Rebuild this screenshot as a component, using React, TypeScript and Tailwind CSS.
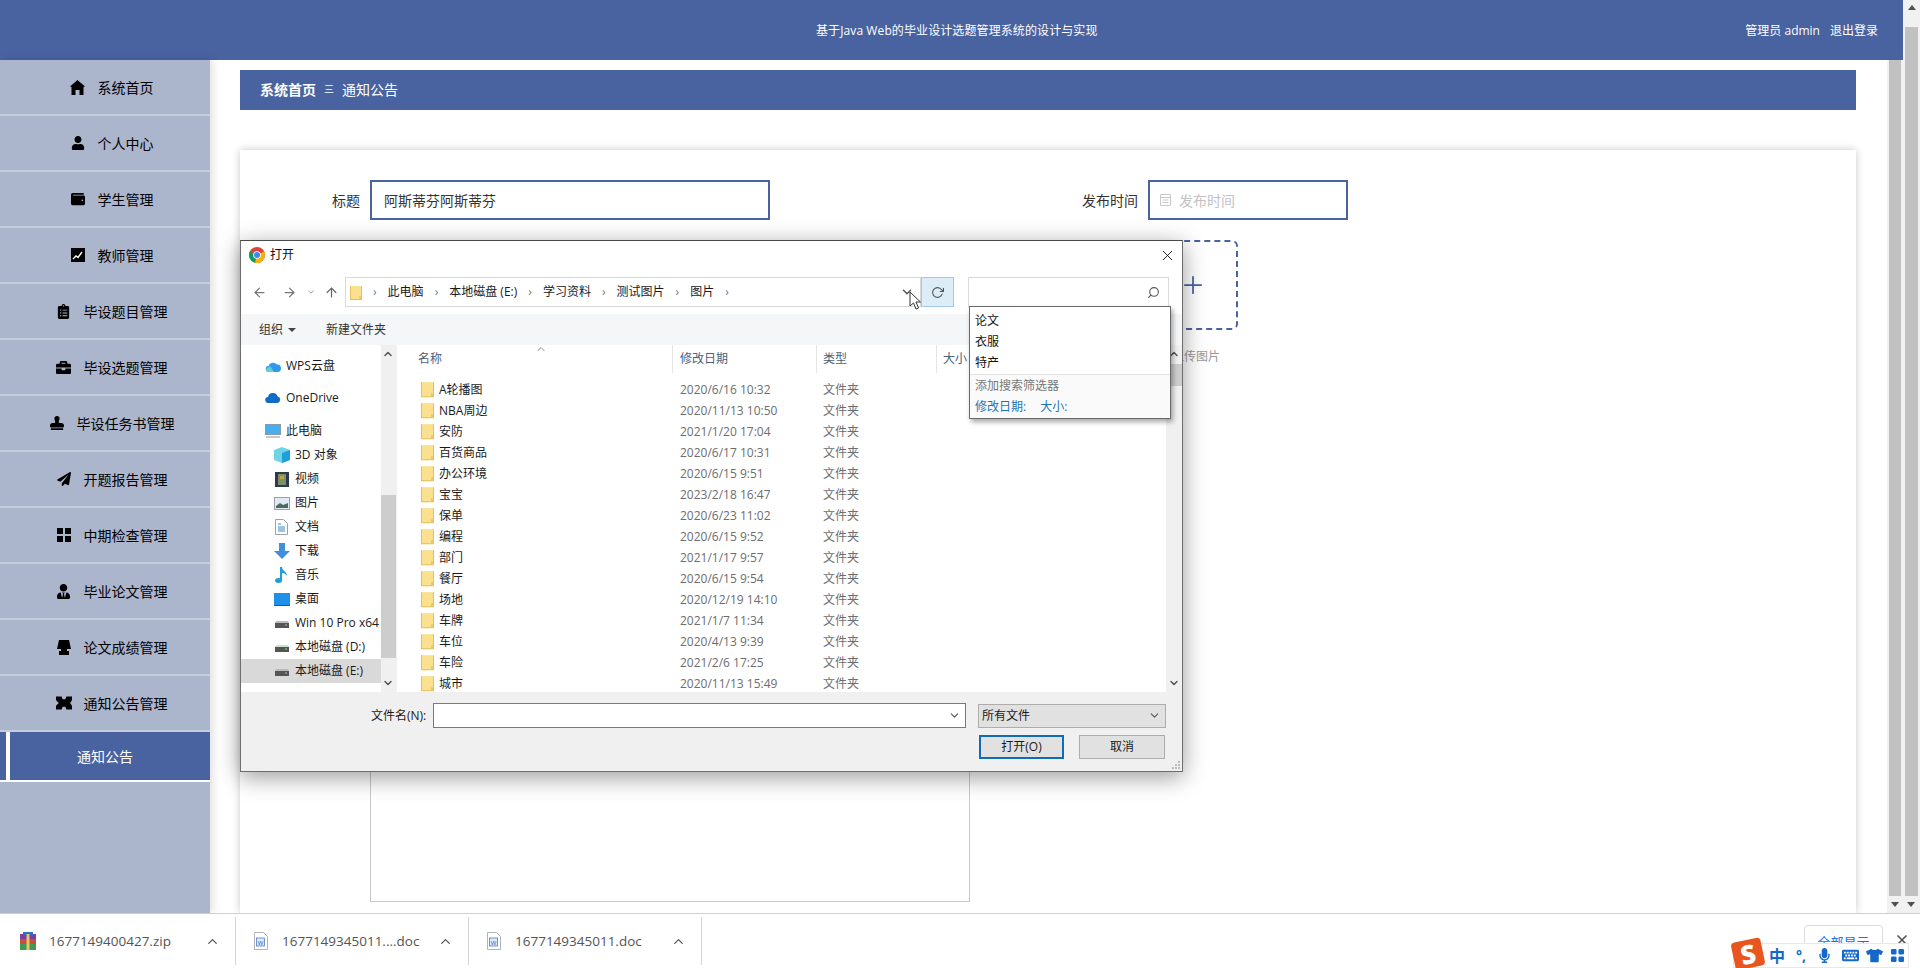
import { ReactNode } from "react";
import {
  FaUser,
  FaWallet,
  FaClipboardList,
  FaBriefcase,
  FaStamp,
  FaPaperPlane,
  FaUserTie,
  FaMicrophone,
  FaKeyboard,
  FaTshirt,
} from "react-icons/fa";
import { BsGridFill } from "react-icons/bs";
import { FiChevronDown, FiChevronUp, FiX, FiPlus, FiArrowLeft, FiArrowRight, FiArrowUp, FiRotateCw, FiSearch } from "react-icons/fi";

const HomeIcon = () => (
  <svg width="15" height="15" viewBox="0 0 15 15">
    <path d="M7.500 0L15 6.500 13.500 7V15H9.500V10h-4v5H1.500V7L0 6.500z" fill="#000" />
  </svg>
);

const TeacherIcon = () => (
  <svg width="14" height="14" viewBox="0 0 14 14">
    <rect width="14" height="14" fill="#000" />
    <polyline points="2,11 5,8 7,9.5 11,4" fill="none" stroke="#fff" strokeWidth="1.4" />
  </svg>
);

const GridIcon = () => (
  <svg width="14" height="14" viewBox="0 0 14 14">
    <path d="M0 0h6v6H0zM8 0h6v6H8zM0 8h6v6H0zM8 8h6v6H8z" fill="#000" />
  </svg>
);

const ScoreIcon = () => (
  <svg width="14" height="15" viewBox="0 0 14 15">
    <path d="M2 0h10l2 9H0z" fill="#000" />
    <path d="M2 11h10v4H2z" fill="#000" />
    <path d="M4 9h6v2H4z" fill="#000" />
  </svg>
);

const TicketIcon = () => (
  <svg width="17" height="14" viewBox="0 0 17 14">
    <path d="M0 0h6l1 3h3l1-3h6v4l-2 3 2 3v4h-6l-1-3H7l-1 3H0v-4l3-3-3-3z" fill="#000" />
  </svg>
);

const menu: { label: string; icon: ReactNode }[] = [
  { label: "系统首页", icon: <HomeIcon /> },
  { label: "个人中心", icon: <FaUser size={14} /> },
  { label: "学生管理", icon: <FaWallet size={14} /> },
  { label: "教师管理", icon: <TeacherIcon /> },
  { label: "毕设题目管理", icon: <FaClipboardList size={15} /> },
  { label: "毕设选题管理", icon: <FaBriefcase size={15} /> },
  { label: "毕设任务书管理", icon: <FaStamp size={14} /> },
  { label: "开题报告管理", icon: <FaPaperPlane size={14} /> },
  { label: "中期检查管理", icon: <GridIcon /> },
  { label: "毕业论文管理", icon: <FaUserTie size={15} /> },
  { label: "论文成绩管理", icon: <ScoreIcon /> },
  { label: "通知公告管理", icon: <TicketIcon /> },
];

const files = [
  ["A轮播图", "2020/6/16 10:32"],
  ["NBA周边", "2020/11/13 10:50"],
  ["安防", "2021/1/20 17:04"],
  ["百货商品", "2020/6/17 10:31"],
  ["办公环境", "2020/6/15 9:51"],
  ["宝宝", "2023/2/18 16:47"],
  ["保单", "2020/6/23 11:02"],
  ["编程", "2020/6/15 9:52"],
  ["部门", "2021/1/17 9:57"],
  ["餐厅", "2020/6/15 9:54"],
  ["场地", "2020/12/19 14:10"],
  ["车牌", "2021/1/7 11:34"],
  ["车位", "2020/4/13 9:39"],
  ["车险", "2021/2/6 17:25"],
  ["城市", "2020/11/13 15:49"],
];

const Folder = ({ size = 13 }: { size?: number }) => (
  <svg width={size} height={size * 1.25} viewBox="0 0 13 16" className="shrink-0">
    <path d="M0 1h13v15H0z" fill="#fbe08e" />
    <path d="M0 1h1v15H0zM0 15h13v1H0zM12 1h1v15h-1z" fill="#e3bf62" />
    <path d="M10 12h2v3h-2z" fill="#e9c86c" />
  </svg>
);

const Drive = ({ dark }: { dark?: boolean }) => (
  <svg width="14" height="10" viewBox="0 0 14 10">
    <path d="M1 3h12l1 2H0z" fill={dark ? "#bbb" : "#cfe0cf"} />
    <rect y="5" width="14" height="5" fill="#555" />
    <rect x="10" y="6.500" width="2" height="1" fill="#9c9" />
  </svg>
);

const navItems: { label: string; icon: ReactNode; pl: string; h: string }[] = [
  {
    label: "WPS云盘",
    pl: "pl-[23px]",
    h: "h-[32px]",
    icon: (
      <svg width="16" height="12" viewBox="0 0 16 12">
        <path d="M4 12a3 3 0 0 1-.6-6A5 5 0 0 1 12 4.6 3.7 3.7 0 0 1 12.500 12z" fill="#2f9be8" />
        <path d="M1 9a3 3 0 0 0 3 3h5L5 6z" fill="#62cfd6" />
      </svg>
    ),
  },
  {
    label: "OneDrive",
    pl: "pl-[23px]",
    h: "h-[31px] mb-[6px]",
    icon: (
      <svg width="16" height="11" viewBox="0 0 16 11">
        <path d="M3.500 11a3 3 0 0 1-.5-6 5 5 0 0 1 9.500-.8A3.500 3.500 0 0 1 12.500 11z" fill="#0f6cc4" />
      </svg>
    ),
  },
  {
    label: "此电脑",
    pl: "pl-[23px]",
    h: "h-[24px]",
    icon: (
      <svg width="16" height="14" viewBox="0 0 16 14">
        <rect x=".5" y=".5" width="15" height="10" fill="#45b0ef" stroke="#8a9aa8" />
        <rect x="1" y="12" width="14" height="2" fill="#c3c9cf" />
      </svg>
    ),
  },
  {
    label: "3D 对象",
    pl: "pl-[32px]",
    h: "h-[24px]",
    icon: (
      <svg width="16" height="16" viewBox="0 0 16 16">
        <path d="M8 0l8 3v10l-8 3-8-3V3z" fill="#6fd5e6" />
        <path d="M8 6l8-3v10l-8 3z" fill="#1f9ed8" />
      </svg>
    ),
  },
  {
    label: "视频",
    pl: "pl-[32px]",
    h: "h-[24px]",
    icon: (
      <svg width="16" height="15" viewBox="0 0 16 15">
        <rect x="1" width="14" height="15" fill="#2c3a4c" />
        <rect x="4" y="2" width="8" height="11" fill="#7c8f6c" />
        <rect x="6" y="4" width="4" height="3" fill="#c8a040" />
      </svg>
    ),
  },
  {
    label: "图片",
    pl: "pl-[32px]",
    h: "h-[24px]",
    icon: (
      <svg width="16" height="13" viewBox="0 0 16 13">
        <rect x=".5" y=".5" width="15" height="12" fill="#dfe9f2" stroke="#9aa3ad" />
        <path d="M2 9l4-3 3 2 5-2v5H2z" fill="#4f6a5c" />
      </svg>
    ),
  },
  {
    label: "文档",
    pl: "pl-[32px]",
    h: "h-[24px]",
    icon: (
      <svg width="13" height="16" viewBox="0 0 13 16">
        <path d="M.5.500h8l4 4v11H.5z" fill="#fff" stroke="#9aa3ad" />
        <path d="M3 5h3M3 8h7M3 10h7M3 12h7" stroke="#3f86c4" />
      </svg>
    ),
  },
  {
    label: "下载",
    pl: "pl-[32px]",
    h: "h-[24px]",
    icon: (
      <svg width="16" height="16" viewBox="0 0 16 16">
        <path d="M5 0h6v8h5l-8 8-8-8h5z" fill="#3f8fdc" />
      </svg>
    ),
  },
  {
    label: "音乐",
    pl: "pl-[32px]",
    h: "h-[24px]",
    icon: (
      <svg width="13" height="16" viewBox="0 0 13 16">
        <ellipse cx="3.500" cy="13.500" rx="3.500" ry="2.500" fill="#1f9ed8" />
        <path d="M5 0h2c0 4 5 4 5 9-1-2-3-3-5-3v8H5z" fill="#1f9ed8" />
      </svg>
    ),
  },
  {
    label: "桌面",
    pl: "pl-[32px]",
    h: "h-[24px]",
    icon: (
      <svg width="16" height="13" viewBox="0 0 16 13">
        <rect width="16" height="13" fill="#1e90ea" />
        <rect y="12" width="16" height="1" fill="#0b5fa8" />
      </svg>
    ),
  },
];

const Scrollbar = ({ thumbClass, hidden }: { thumbClass: string; hidden?: boolean }) => (
  <div className="relative h-full w-full bg-[#f1f1f1]">
    <div className={`absolute left-[2px] right-[2px] bottom-[17px] bg-[#c1c1c1] ${thumbClass}`} />
    {!hidden && <div className="absolute top-[5px] left-[5px] h-0 w-0 border-x-[4px] border-b-[5px] border-x-transparent border-b-[#505050]" />}
    <div className="absolute bottom-[6px] left-[4px] h-0 w-0 border-x-[4px] border-t-[5px] border-x-transparent border-t-[#505050]" />
  </div>
);

const Crumb = ({ text }: { text: string }) => (
  <>
    <span className="ml-[11px] text-[#777]">›</span>
    <span className="ml-[11px]">{text}</span>
  </>
);

const Dialog = () => (
  <div className="absolute left-[240px] top-[240px] flex h-[532px] w-[943px] flex-col border border-[#6d6d6d] border-t-[#4a4a4a] bg-white text-[12px] shadow-[0_5px_22px_rgba(0,0,0,0.4)]">
    <div className="flex h-[36px] shrink-0 items-center pb-[8px] pl-[8px]">
      <svg width="16" height="16" viewBox="0 0 16 16">
        <circle cx="8" cy="8" r="8" fill="#db4437" />
        <path d="M8 8L1 4.500A8 8 0 0 0 6 15.800z" fill="#0f9d58" />
        <path d="M8 8l7-3.500A8 8 0 0 1 6 15.800z" fill="#f4b400" />
        <circle cx="8" cy="8" r="3.800" fill="#fff" />
        <circle cx="8" cy="8" r="3" fill="#4285f4" />
      </svg>
      <span className="ml-[5px] text-[#111]">打开</span>
      <FiX size={17} strokeWidth={1.2} className="ml-auto mr-[6px] text-black" />
    </div>

    <div className="flex h-[30px] shrink-0 items-center">
      <FiArrowLeft size={15} className="ml-[11px] text-[#777]" />
      <FiArrowRight size={15} className="ml-[15px] text-[#777]" />
      <FiChevronDown size={10} className="ml-[9px] text-[#888]" />
      <FiArrowUp size={15} className="ml-[8px] text-[#666]" />
      <div className="ml-[6px] flex h-full w-[576px] items-center border border-[#d9d9d9] pl-[4px] text-[#1a1a1a]">
        <Folder size={12} />
        <Crumb text="此电脑" />
        <Crumb text="本地磁盘 (E:)" />
        <Crumb text="学习资料" />
        <Crumb text="测试图片" />
        <Crumb text="图片" />
        <span className="ml-[11px] text-[#777]">›</span>
        <FiChevronDown size={14} strokeWidth={2.5} className="ml-auto mr-[6px] text-[#555]" />
      </div>
      <div className="flex h-full w-[33px] items-center justify-center border border-[#9fcbe8] bg-[#dcedf8]">
        <FiRotateCw size={13} className="text-[#555]" />
      </div>
      <div className="ml-[14px] flex h-full w-[201px] items-center justify-end border border-[#d9d9d9] pr-[8px]">
        <FiSearch size={13} className="-scale-x-100 text-[#555]" />
      </div>
    </div>

    <div className="mt-[7px] flex h-[31px] shrink-0 items-center bg-[#f5f6f7] text-[#333]">
      <span className="ml-[18px]">组织</span>
      <span className="ml-[5px] h-0 w-0 border-x-[4px] border-t-[4px] border-x-transparent border-t-[#444]" />
      <span className="ml-[30px]">新建文件夹</span>
    </div>

    <div className="relative flex h-[347px] shrink-0 overflow-hidden">
      <div className="w-[140px] shrink-0 overflow-hidden whitespace-nowrap pt-[5px] text-[#1a1a1a]">
        {navItems.map((n) => (
          <div key={n.label} className={`flex items-center gap-[5px] ${n.pl} ${n.h}`}>
            <span className="flex w-[17px] justify-center">{n.icon}</span>
            <span>{n.label}</span>
          </div>
        ))}
        <div className="flex h-[24px] items-center gap-[5px] pl-[32px]">
          <span className="flex w-[17px] justify-center"><Drive dark /></span>
          <span>Win 10 Pro x64</span>
        </div>
        <div className="flex h-[24px] items-center gap-[5px] pl-[32px]">
          <span className="flex w-[17px] justify-center"><Drive /></span>
          <span>本地磁盘 (D:)</span>
        </div>
        <div className="flex h-[24px] items-center gap-[5px] bg-[#d9d9d9] pl-[32px]">
          <span className="flex w-[17px] justify-center"><Drive dark /></span>
          <span>本地磁盘 (E:)</span>
        </div>
      </div>
      <div className="relative w-[15px] shrink-0 bg-[#f0f0f0]">
        <FiChevronUp size={12} strokeWidth={3} className="absolute left-[1px] top-[3px] text-[#555]" />
        <div className="absolute left-0 right-0 top-[150px] h-[163px] bg-[#cdcdcd]" />
        <FiChevronDown size={12} strokeWidth={3} className="absolute bottom-[3px] left-[1px] text-[#555]" />
      </div>

      <div className="min-w-0 flex-1 border-l border-[#f0f0f0] pl-0">
        <div className="flex h-[28px] items-center text-[#4c607a]">
          <div className="flex h-full w-[276px] items-center border-r border-[#e5e5e5] pl-[21px]">名称</div>
          <div className="flex h-full w-[144px] items-center border-r border-[#e5e5e5] pl-[7px]">修改日期</div>
          <div className="flex h-full w-[120px] items-center border-r border-[#e5e5e5] pl-[6px]">类型</div>
          <div className="pl-[6px]">大小</div>
        </div>
        <FiChevronUp size={12} className="absolute left-[294px] top-[-2px] text-[#888]" />
        <div className="pt-[6px]">
          {files.map(([name, date]) => (
            <div key={name} className="flex h-[21px] items-center">
              <div className="flex w-[276px] items-center gap-[5px] pl-[24px] text-[#1a1a1a]">
                <Folder size={13} />
                <span>{name}</span>
              </div>
              <div className="w-[144px] pl-[7px] text-[#6d6d6d]">{date}</div>
              <div className="pl-[6px] text-[#6d6d6d]">文件夹</div>
            </div>
          ))}
        </div>
      </div>

      <div className="relative w-[16px] shrink-0 bg-[#f0f0f0]">
        <FiChevronUp size={12} strokeWidth={3} className="absolute left-[2px] top-[3px] text-[#555]" />
        <div className="absolute left-0 right-0 top-[19px] h-[22px] bg-[#cdcdcd]" />
        <FiChevronDown size={12} strokeWidth={3} className="absolute bottom-[3px] left-[2px] text-[#555]" />
      </div>
    </div>

    <div className="relative flex-1 bg-[#f0f0f0] text-[#1a1a1a]">
      <div className="mt-[11px] flex h-[25px] items-center">
        <span className="ml-[130px] w-[62px]">文件名(N):</span>
        <div className="flex h-full w-[533px] items-center justify-end border border-[#7a7a7a] bg-white pr-[4px]">
          <FiChevronDown size={13} className="text-[#555]" />
        </div>
        <div className="ml-[12px] flex h-[24px] w-[188px] items-center justify-between border border-[#adadad] bg-[#e1e1e1] pl-[3px] pr-[4px]">
          <span>所有文件</span>
          <FiChevronDown size={13} className="text-[#555]" />
        </div>
      </div>
      <div className="mr-[17px] mt-[7px] flex justify-end gap-[15px]">
        <div className="flex h-[24px] w-[85px] items-center justify-center border-2 border-[#0f6cb5] bg-[#e1e1e1]">打开(O)</div>
        <div className="flex h-[24px] w-[86px] items-center justify-center border border-[#adadad] bg-[#e1e1e1]">取消</div>
      </div>
    </div>

    <div className="absolute left-[728px] top-[65px] w-[202px] border border-[#6a6a6a] bg-white shadow-[2px_3px_5px_rgba(0,0,0,0.35)]">
      <div className="px-[5px] pt-[3px] text-[#111]">
        <div className="h-[21px] leading-[21px]">论文</div>
        <div className="h-[21px] leading-[21px]">衣服</div>
        <div className="h-[21px] leading-[21px]">特产</div>
      </div>
      <div className="mt-[1px] h-[44px] border-t border-[#e2e2e2] bg-[#fafafa] px-[5px] pt-[2px]">
        <div className="text-[#777]">添加搜索筛选器</div>
        <div className="mt-[3px] flex gap-[14px] text-[#1a74b8]">
          <span>修改日期:</span>
          <span>大小:</span>
        </div>
      </div>
    </div>

    <svg width="13" height="19" viewBox="0 0 13 19" className="absolute left-[668px] top-[50px]">
      <path d="M1 1v14l3.500-3 2.500 6 2.500-1-2.500-6h4.500z" fill="#fff" stroke="#333" />
    </svg>

    <svg width="10" height="10" viewBox="0 0 10 10" className="absolute bottom-[1px] right-[1px]">
      <path d="M7 1h2v2H7zM4 4h2v2H4zM7 4h2v2H7zM1 7h2v2H1zM4 7h2v2H4zM7 7h2v2H7z" fill="#bbb" />
    </svg>
  </div>
);

const DocIcon = () => (
  <svg width="14" height="18" viewBox="0 0 14 18" className="shrink-0">
    <path d="M.5.500h9l4 4v13H.5z" fill="#fff" stroke="#aeb4bc" />
    <rect x="2.500" y="6" width="8" height="8" fill="#dbe8f8" stroke="#4a7fc8" strokeWidth=".8" />
    <text x="6.500" y="12.500" fontSize="6" textAnchor="middle" fill="#2f66b5">W</text>
  </svg>
);

const ZipIcon = () => (
  <svg width="16" height="18" viewBox="0 0 16 18" className="shrink-0">
    <rect y="2" width="16" height="5" fill="#7c3fa0" />
    <rect y="7" width="16" height="5" fill="#c8503a" />
    <rect y="12" width="16" height="6" fill="#3e9a55" />
    <rect x="3" width="10" height="3" fill="#2f6fc4" />
    <rect x="6.500" y="2" width="3" height="16" fill="#e9c46a" />
  </svg>
);

const Download = ({ icon, name }: { icon: ReactNode; name: string }) => (
  <div className="flex h-[48px] w-[216px] items-center border-r border-[#d4d4d4]">
    <span className="flex w-[16px] justify-center">{icon}</span>
    <span className="ml-[13px] w-[156px] text-[13.5px] text-[#555]">{name}</span>
    <FiChevronUp size={15} className="text-[#555]" />
  </div>
);

export default function App() {
  return (
    <div className="relative flex h-[968px] w-[1920px] flex-col overflow-hidden bg-white font-['Open_Sans','Noto_Sans_CJK_SC',sans-serif]">
      <div className="flex h-[913px] shrink-0">
        <div className="flex min-w-0 flex-1 flex-col">
          <div className="flex h-[60px] shrink-0 items-center bg-[#4863a0] pt-[2px] text-[12px] text-white">
            <span className="ml-[816px] tracking-[0.1px]">基于Java Web的毕业设计选题管理系统的设计与实现</span>
            <span className="ml-auto">管理员 admin</span>
            <span className="ml-[10px] mr-[25px]">退出登录</span>
          </div>
          <div className="flex min-h-0 flex-1">
            <div className="w-[210px] shrink-0 bg-[#abb5cc] text-[14px] text-black shadow-[3px_0_8px_rgba(0,0,0,0.12)]">
              {menu.map((m) => (
                <div key={m.label} className="flex h-[56px] items-center justify-center gap-[12px] border-b-2 border-[#c6cddd] pl-[13px]">
                  <span className="flex w-[16px] justify-center">{m.icon}</span>
                  <span>{m.label}</span>
                </div>
              ))}
              <div className="flex h-[50px] border-b-2 border-white">
                <div className="w-[6px] bg-[#4863a0]" />
                <div className="w-[4px] bg-white" />
                <div className="flex flex-1 items-center bg-[#4863a0] pl-[67px] text-white">通知公告</div>
              </div>
            </div>

            <div className="flex min-w-0 flex-1 flex-col pl-[30px] pr-[31px] pt-[10px]">
              <div className="flex h-[40px] shrink-0 items-center bg-[#4863a0] pb-[2px] pl-[20px] text-[14px] text-white">
                <span className="font-bold">系统首页</span>
                <span className="mx-[8px] text-[10px]">三</span>
                <span>通知公告</span>
              </div>
              <div className="mt-[40px] min-h-0 flex-1 bg-white pt-[30px] text-[14px] shadow-[0_0_8px_rgba(0,0,0,0.22)]">
                <div className="flex h-[40px] items-center">
                  <span className="w-[120px] text-right text-[#333]">标题</span>
                  <div className="ml-[10px] flex h-full w-[400px] items-center border-2 border-[#4863a0] px-[12px] text-[#333]">阿斯蒂芬阿斯蒂芬</div>
                  <span className="ml-[248px] w-[120px] text-right text-[#333]">发布时间</span>
                  <div className="ml-[10px] flex h-full w-[200px] items-center border-2 border-[#4863a0] pl-[9px] text-[#c2c2c2]">
                    <svg width="13" height="14" viewBox="0 0 13 14" className="mr-[7px]">
                      <path d="M1.500 1.500h10v11h-10zM1.500 4.500h10M3.500 7h6M3.500 9.500h6" fill="none" stroke="#c8c8c8" />
                    </svg>
                    发布时间
                  </div>
                </div>
                <div className="ml-[908px] mt-[20px] w-[90px]">
                  <div className="flex h-[90px] w-[90px] items-center justify-center rounded-[6px] border-2 border-dashed border-[#4863a0]">
                    <FiPlus size={28} strokeWidth={1.5} className="text-[#4863a0]" />
                  </div>
                  <div className="mt-[18px] pl-[24px] text-[12px] whitespace-nowrap text-[#999]">上传图片</div>
                </div>
                <div className="ml-[130px] mt-[9px] h-[527px] w-[600px] border border-[#c9c9c9]" />
              </div>
            </div>

            <div className="h-full w-[16px] shrink-0">
              <Scrollbar thumbClass="top-0" hidden />
            </div>
          </div>
        </div>
        <div className="w-[17px] shrink-0">
          <Scrollbar thumbClass="top-[27px]" />
        </div>
      </div>

      <div className="flex h-[55px] shrink-0 items-center border-t border-[#cfcfcf] bg-white pl-[20px]">
        <Download icon={<ZipIcon />} name="1677149400427.zip" />
        <div className="w-[17px]" />
        <Download icon={<DocIcon />} name="1677149345011....doc" />
        <div className="w-[17px]" />
        <Download icon={<DocIcon />} name="1677149345011.doc" />
        <div className="ml-auto mr-[37px] mt-[11px] flex h-[36px] w-[79px] items-center justify-center self-start rounded-[4px] border border-[#dadce0] text-[13px] text-[#1a73e8]">全部显示</div>
      </div>

      <FiX size={16} strokeWidth={2.5} className="absolute left-[1894px] top-[932px] text-[#555]" />

      <Dialog />

      <div className="absolute left-[1733px] top-[943px] flex h-[25px] w-[176px] items-center border border-[#e8e8e8] bg-white pl-[35px] text-[#1468c9]">
        <div className="absolute -left-[1px] -top-[4px] flex h-[28px] w-[30px] -rotate-12 items-center justify-center rounded-[4px] bg-[#e8551f] text-[26px] font-black leading-none text-white">S</div>
        <span className="text-[16px] font-bold">中</span>
        <span className="ml-[11px] text-[14px] font-bold leading-none">°,</span>
        <FaMicrophone size={15} className="ml-[11px]" />
        <FaKeyboard size={17} className="ml-[10px]" />
        <FaTshirt size={17} className="ml-[7px]" />
        <BsGridFill size={15} className="ml-[7px]" />
      </div>
    </div>
  );
}
